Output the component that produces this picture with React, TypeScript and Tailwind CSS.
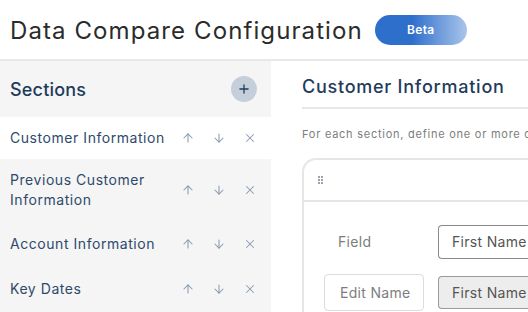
import { ArrowDown, ArrowUp, X, Plus } from "lucide-react";

interface Section {
  name: string;
  selected?: boolean;
  h: string;
}

const sections: Section[] = [
  { name: "Customer Information", selected: true, h: "h-[42px]" },
  { name: "Previous Customer Information", h: "h-[62px]" },
  { name: "Account Information", h: "h-[46px]" },
  { name: "Key Dates", h: "h-[44px]" },
];

function App() {
  return (
    <div className="w-[528px] h-[312px] overflow-hidden bg-white font-['Inter',sans-serif]">
      <div className="h-[61px] flex items-center pl-[10px] gap-[12px] border-b-2 border-[#e8e8e8]">
        <h1 className="text-[24px] tracking-[1.1px] text-[#2b2b2b] leading-none pt-[3px]">
          Data Compare Configuration
        </h1>
        <span className="w-[92px] h-[30px] rounded-full bg-gradient-to-r from-[#2e6fcb] from-40% to-[#a9c4ea] flex items-center justify-center text-white text-[12px] font-semibold tracking-[0.3px]">
          Beta
        </span>
      </div>

      <div className="flex">
        <div className="w-[271px] bg-[#f5f5f5] h-[251px]">
          <div className="h-[56px] flex items-center justify-between pl-[10px] pr-[14px]">
            <span className="text-[18px] font-medium text-[#1f3b5c] tracking-[0.2px]">
              Sections
            </span>
            <button className="w-[26px] h-[26px] rounded-full bg-[#c5cfdb] flex items-center justify-center text-[#1f3b5c]">
              <Plus size={14} strokeWidth={2.2} />
            </button>
          </div>
          {sections.map((s) => (
            <div
              key={s.name}
              className={`${s.h} flex items-center pl-[10px] pr-[14px] ${
                s.selected ? "bg-white" : ""
              }`}
            >
              <span className="flex-1 text-[14px] leading-[20px] tracking-[0.55px] text-[#2e4a6b] pr-[10px]">
                {s.name}
              </span>
              <div className="flex items-center gap-[17px] text-[#8a9bb1]">
                <ArrowUp size={14} strokeWidth={1.8} />
                <ArrowDown size={14} strokeWidth={1.8} />
                <X size={14} strokeWidth={1.8} />
              </div>
            </div>
          ))}
        </div>

        <div className="flex-1 pl-[31px] min-w-0">
          <div className="h-[48px] flex items-end pb-[11px] border-b-2 border-[#e8e8e8]">
            <h2 className="text-[18px] font-medium text-[#1f3b5c] leading-none tracking-[0.75px] whitespace-nowrap">
              Customer Information
            </h2>
          </div>
          <p className="text-[11px] tracking-[0.75px] text-[#7d7d7d] mt-[17px] whitespace-nowrap overflow-hidden">
            For each section, define one or more data points to compare
          </p>
          <div className="mt-[15px] border-2 border-r-0 border-[#e6e6e6] rounded-tl-[14px] h-[200px]">
            <div className="h-[42px] flex items-center pl-[14px] border-b-2 border-[#e6e6e6]">
              <div className="grid grid-cols-2 gap-[1px]">
                {[0, 1, 2, 3, 4, 5].map((i) => (
                  <span key={i} className="w-[2px] h-[2px] bg-[#9aa4b0]" />
                ))}
              </div>
            </div>
            <div className="pl-[20px] pt-[23px] flex flex-col gap-[15px]">
              <div className="flex items-center">
                <span className="w-[114px] pl-[14px] text-[14px] tracking-[0.3px] text-[#7d7d7d]">
                  Field
                </span>
                <div className="h-[34px] flex-1 border border-[#8a8a8a] rounded-[4px] border-r-0 rounded-r-none flex items-center pl-[13px] text-[14px] tracking-[0.3px] text-[#555] whitespace-nowrap overflow-hidden">
                  First Name
                </div>
              </div>
              <div className="flex items-center">
                <div className="w-[100px] h-[37px] border border-[#dcdcdc] rounded-[4px] flex items-center pl-[15px] text-[14px] tracking-[0.3px] text-[#7d7d7d] mr-[14px] whitespace-nowrap">
                  Edit Name
                </div>
                <div className="h-[33px] flex-1 border border-[#9a9a9a] bg-[#ededed] rounded-[4px] border-r-0 rounded-r-none flex items-center pl-[13px] text-[14px] tracking-[0.3px] text-[#555] whitespace-nowrap overflow-hidden">
                  First Name
                </div>
              </div>
            </div>
          </div>
        </div>
      </div>
    </div>
  );
}

export default App;
